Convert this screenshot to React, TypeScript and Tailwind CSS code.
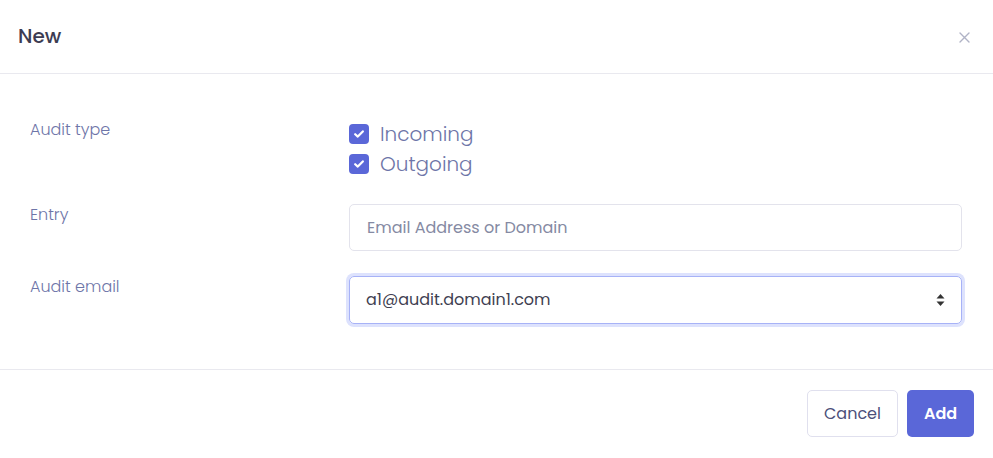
import React from 'react';

function CheckRow({ label }: { label: string }) {
  return (
    <label className="flex items-center h-[30px] gap-[11px]">
      <span className="w-[20px] h-[20px] rounded-[4px] bg-[#5a67d8] flex items-center justify-center">
        <svg width="10" height="8" viewBox="0 0 10 8" fill="none">
          <path d="M1.2 4.2 3.8 6.6 8.8 1.4" stroke="#fff" strokeWidth="2.2" strokeLinecap="round" strokeLinejoin="round" />
        </svg>
      </span>
      <span className="text-[20px] leading-[30px] text-[#6e75a8] font-light">{label}</span>
    </label>
  );
}

export default function App() {
  return (
    <div className="w-[993px] h-[458px] bg-white font-['Poppins','Inter',sans-serif] flex flex-col">
      <div className="h-[74px] border-b border-[#e9e9ef] flex items-center justify-between pl-[18px] pr-[23px]">
        <h1 className="text-[20px] font-medium text-[#3d3c52] leading-none -mt-[1px]">New</h1>
        <svg width="11" height="11" viewBox="0 0 11 11" className="mt-[1px]">
          <path d="M1 1 10 10M10 1 1 10" stroke="#b0b3c6" strokeWidth="1.4" strokeLinecap="round" />
        </svg>
      </div>

      <div className="flex flex-col gap-[25px] pt-[45px] pb-[45px] pl-[30px] pr-[31px] border-b border-[#e9e9ef]">
        <div className="flex">
          <div className="w-[319px] text-[16px] leading-[22px] font-light text-[#6e75a8]">Audit type</div>
          <div className="flex flex-col">
            <CheckRow label="Incoming" />
            <CheckRow label="Outgoing" />
          </div>
        </div>

        <div className="flex">
          <div className="w-[319px] text-[16px] leading-[22px] font-light text-[#6e75a8]">Entry</div>
          <div className="flex-1 h-[47px] border border-[#e3e3ec] rounded-[5px] flex items-center px-[17px] text-[16px] text-[#858aa3]">
            Email Address or Domain
          </div>
        </div>

        <div className="flex">
          <div className="w-[319px] text-[16px] leading-[22px] font-light text-[#6e75a8]">Audit email</div>
          <div className="flex-1 h-[48px] border border-[#a7b2f7] rounded-[5px] ring-[3px] ring-[#dde2fd] flex items-center justify-between pl-[16px] pr-[16px] text-[16px] text-[#3f3f52]">
            <span>a1@audit.domain1.com</span>
            <svg width="9" height="14" viewBox="0 0 9 14">
              <path d="M4.5 1 8.5 5.5H0.5Z" fill="#333" />
              <path d="M4.5 13 8.5 8.5H0.5Z" fill="#333" />
            </svg>
          </div>
        </div>
      </div>

      <div className="flex justify-end gap-[9px] pt-[20px] pr-[19px]">
        <button className="h-[47px] w-[91px] border border-[#e0e0ee] rounded-[5px] text-[16px] text-[#4c4f7a]">
          Cancel
        </button>
        <button className="h-[47px] w-[67px] rounded-[5px] bg-[#5a67d8] text-[16px] font-semibold text-white">
          Add
        </button>
      </div>
    </div>
  );
}
